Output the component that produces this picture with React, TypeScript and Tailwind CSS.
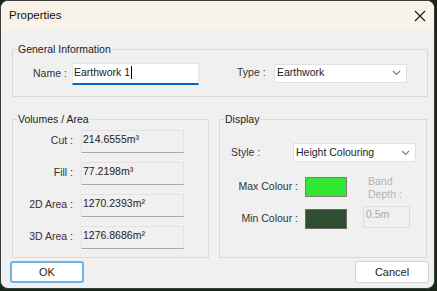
import React from "react";

const font = { fontFamily: '"Liberation Sans", Arial, sans-serif' };

function Chevron() {
  return (
    <svg width="9" height="6" viewBox="0 0 9 6" className="shrink-0">
      <path d="M1 1 L4.5 4.5 L8 1" fill="none" stroke="#7a7a7a" strokeWidth="1.1" />
    </svg>
  );
}

function Group({ title, className, children }: { title: string; className: string; children: React.ReactNode }) {
  return (
    <div className={"relative border border-[#dadada] " + className}>
      <span className="absolute left-[4px] top-[-8px] bg-[#f0f0f0] px-[1px] text-[10.5px] leading-[14px] text-[#222]">
        {title}
      </span>
      {children}
    </div>
  );
}

function ReadField({ value }: { value: string }) {
  return (
    <div className="ml-[8px] h-[23px] w-[103px] border border-[#e2e2e2] border-b-[#a9a9a9] bg-[#f0f0f0] pl-[1px] pt-[2px] text-[10.5px] leading-[13px] text-[#222]">
      {value}
    </div>
  );
}

export default function App() {
  const rows = [
    ["Cut :", "214.6555m\u00b3"],
    ["Fill :", "77.2198m\u00b3"],
    ["2D Area :", "1270.2393m\u00b2"],
    ["3D Area :", "1276.8686m\u00b2"],
  ];
  return (
    <div className="h-[291px] w-[437px] bg-[#1b261b]" style={font}>
      <div className="flex h-[289px] w-[435px] flex-col overflow-hidden rounded-[8px] border border-[#3c3c3c] bg-[#f0f0f0]">
        <div className="flex h-[29px] shrink-0 items-center justify-between bg-[#f9f2e6] pl-[8px] pr-[6px]">
          <span className="text-[11.5px] text-[#111]">Properties</span>
          <svg width="12" height="12" viewBox="0 0 12 12" className="mr-[2px]">
            <path d="M1 1 L11 11 M11 1 L1 11" stroke="#1a1a1a" strokeWidth="1.1" />
          </svg>
        </div>

        <Group title="General Information" className="ml-[11px] mt-[19px] h-[48px] w-[416px]">
          <div className="flex items-center pl-[20px] pt-[13px] text-[10.5px] text-[#222]">
            <span className="w-[39px] text-[#333]">Name :</span>
            <div className="flex h-[22px] w-[127px] items-center border border-[#e6e6e6] border-b-2 border-b-[#0067c0] bg-white pb-[3px] pl-[1px]">
              <span className="leading-[13px]">Earthwork 1</span>
              <span className="ml-[1px] h-[13px] w-[1px] bg-black" />
            </div>
            <span className="ml-[38px] w-[37px] pb-[2px] text-[#333]">Type :</span>
            <div className="mb-[2px] flex h-[19px] w-[133px] items-center justify-between border border-[#e0e0e0] bg-white pl-[2px] pr-[5px]">
              <span>Earthwork</span>
              <Chevron />
            </div>
          </div>
        </Group>

        <div className="ml-[11px] mt-[22px] flex gap-[10px]">
          <Group title="Volumes / Area" className="h-[139px] w-[197px]">
            <div className="flex flex-col gap-[9px] pt-[10px]">
              {rows.map(([l, v]) => (
                <div key={l} className="flex items-center">
                  <span className="w-[60px] pb-[2px] text-right text-[10.5px] text-[#333]">{l}</span>
                  <ReadField value={v} />
                </div>
              ))}
            </div>
          </Group>

          <Group title="Display" className="h-[139px] w-[208px]">
            <div className="flex items-center pl-[11px] pt-[23px] text-[10.5px] text-[#333]">
              <span className="w-[62px]">Style :</span>
              <div className="flex h-[19px] w-[123px] items-center justify-between border border-[#e0e0e0] bg-white pl-[2px] pr-[5px] text-[#222]">
                <span>Height Colouring</span>
                <Chevron />
              </div>
            </div>
            <div className="mt-[15px] flex">
              <div className="flex flex-col gap-[12px]">
                <div className="flex items-center">
                  <span className="w-[78px] text-right text-[10.5px] text-[#333]">Max Colour :</span>
                  <div className="ml-[7px] h-[20px] w-[42px] border border-[#7d7d7d] bg-[#34e634]" />
                </div>
                <div className="flex items-center">
                  <span className="w-[78px] text-right text-[10.5px] text-[#333]">Min Colour :</span>
                  <div className="ml-[7px] h-[20px] w-[42px] border border-[#6b6b6b] bg-[#2f4d30]" />
                </div>
              </div>
              <div className="ml-[16px] mt-[-2px] flex flex-col">
                <span className="pl-[5px] text-[10.5px] leading-[13px] text-[#b3b3b3]">
                  Band
                  <br />
                  Depth :
                </span>
                <div className="mt-[5px] h-[22px] w-[47px] border border-[#dedede] pl-[2px] pt-[1px] text-[10.5px] leading-[13px] text-[#a8a8a8]">
                  0.5m
                </div>
              </div>
            </div>
          </Group>
        </div>

        <div className="mt-[3px] flex justify-between pl-[9px] pr-[5px]">
          <div className="flex h-[22px] w-[74px] items-center justify-center rounded-[3px] border-2 border-[#6cb2ea] bg-white text-[11px] text-[#222]">
            OK
          </div>
          <div className="flex h-[22px] w-[74px] items-center justify-center rounded-[3px] border border-[#d4d4d4] bg-white text-[11px] text-[#222]">
            Cancel
          </div>
        </div>
      </div>
    </div>
  );
}
